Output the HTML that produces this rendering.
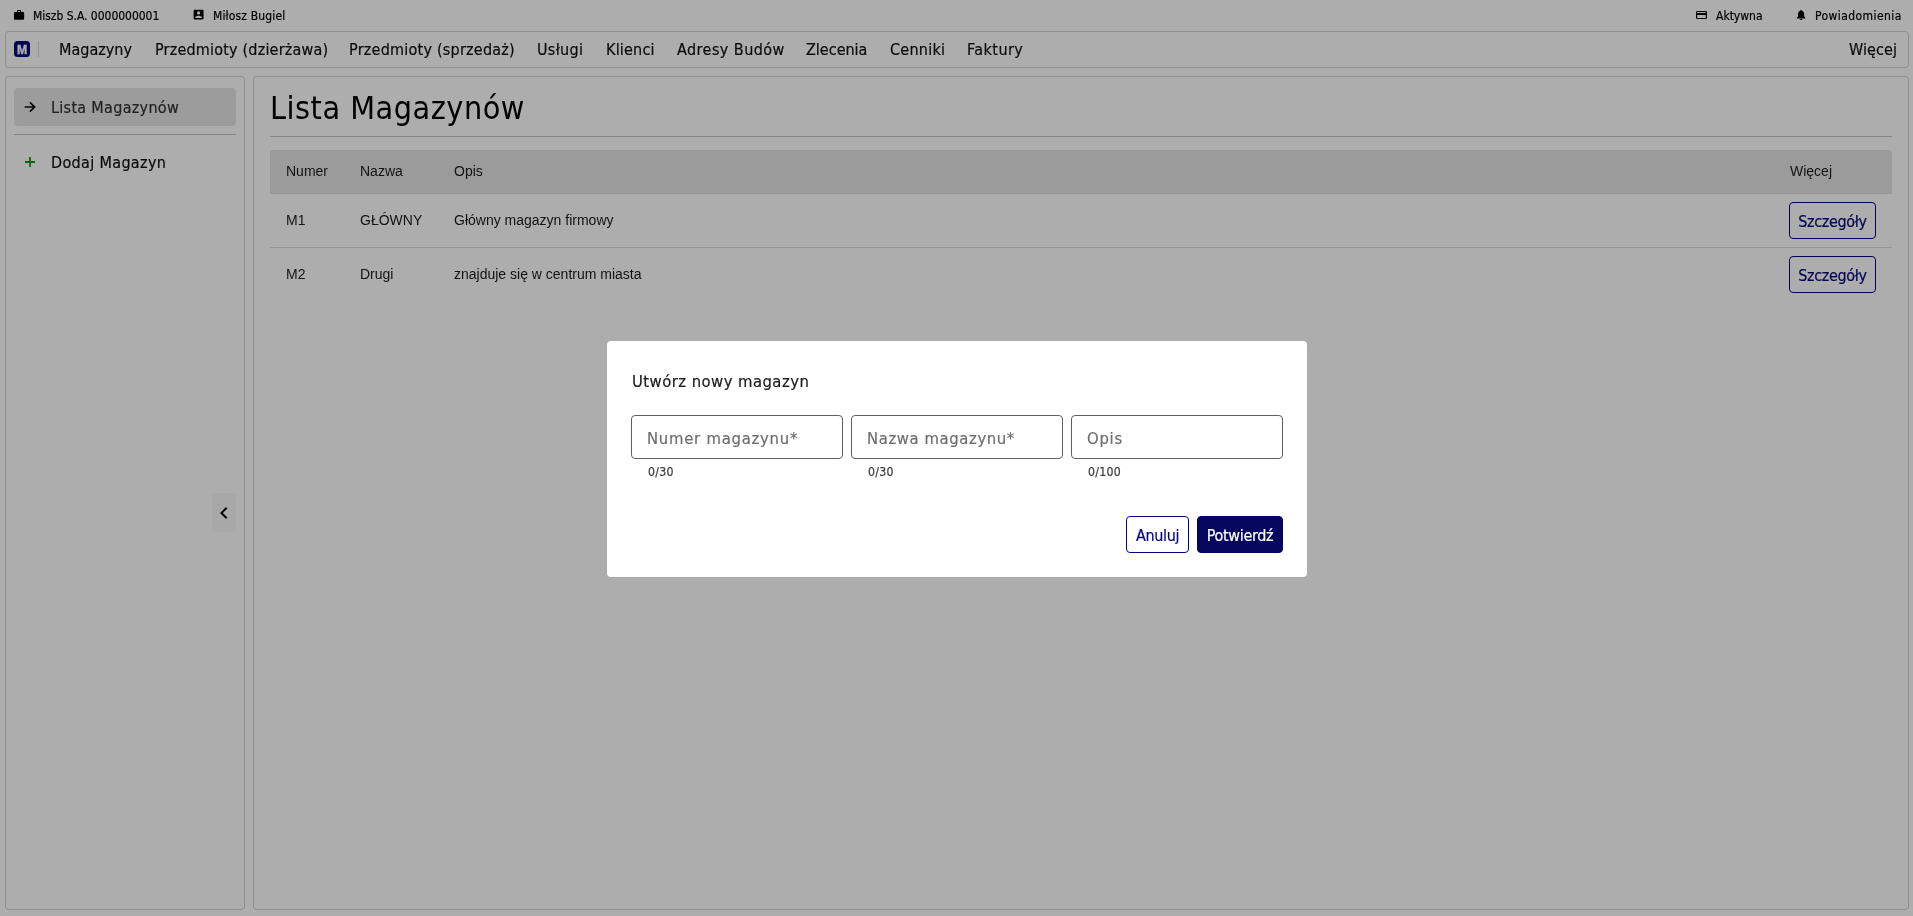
<!DOCTYPE html>
<html lang="pl">
<head>
<meta charset="utf-8">
<title>Lista Magazynów</title>
<style>
*{box-sizing:border-box;margin:0;padding:0}
html,body{width:1913px;height:916px;overflow:hidden;background:#fff}
body{font-family:"DejaVu Sans Condensed","Liberation Sans",sans-serif;color:#000;position:relative}
.abs{position:absolute}
.t{will-change:transform;-webkit-text-stroke:.2px;position:absolute;white-space:nowrap;line-height:1}
/* top bar */
.top{font-size:12px;color:#000}
/* nav */
#nav{left:5px;top:31px;width:1904px;height:37px;border:1px solid #d1d1d1;border-radius:3.5px;background:#fff}
.nv{font-size:16px;color:#111}
#logo{left:14px;top:41px;width:16px;height:16px;border-radius:3.5px;background:#06067a;color:#fff;font-family:"Liberation Sans",sans-serif;font-weight:700;font-size:12.3px;text-align:center;line-height:19.2px;overflow:hidden;will-change:transform;-webkit-text-stroke:.35px}
/* sidebar */
#side{left:5px;top:76px;width:240px;height:834px;border:1px solid #d1d1d1;border-radius:3.5px;background:#fff}
#sel{left:14px;top:88px;width:222px;height:38px;border-radius:4px;background:#e6e6e6}
.sd{font-size:16px}
/* main */
#main{left:253px;top:76px;width:1656px;height:834px;border:1px solid #d1d1d1;border-radius:3.5px;background:#fff}
#title{-webkit-text-stroke:0;font-size:32px;left:270px;top:92.3px;letter-spacing:.52px;color:#000}
.hr{height:1px;background:#c6c6c6}
#thead{left:270px;top:150px;width:1622px;height:44px;background:#e5e5e5;border-radius:3px 3px 0 0;border-bottom:1px solid #dcdcdc}
.tc{font-family:"Liberation Sans",sans-serif;font-size:14px;color:#1c1c1c;-webkit-text-stroke:0}
.btn{will-change:transform;-webkit-text-stroke:.2px;border:1px solid #06067a;border-radius:4px;color:#06067a;font-size:16px;letter-spacing:-.35px;background:transparent;text-align:center}
/* overlay */
#scrim{left:0;top:0;width:1913px;height:916px;background:rgba(0,0,0,.32)}
#modal{left:607px;top:341px;width:700px;height:236px;background:#fff;border-radius:4px}
.inp{top:415px;width:212px;height:44px;border:1px solid #606060;border-radius:4px}
.ph{font-size:16.5px;color:#6e6e6e;top:431px;letter-spacing:.75px}
.cnt{font-size:12.2px;color:#3c3c3c;top:466px;letter-spacing:.3px}
</style>
</head>
<body>
<!-- top bar -->
<svg class="abs" style="left:12.9px;top:8.9px" width="12.2" height="12.2" viewBox="0 0 24 24"><path d="M10,2H14A2,2 0 0,1 16,4V6H20A2,2 0 0,1 22,8V19A2,2 0 0,1 20,21H4C2.89,21 2,20.1 2,19V8C2,6.89 2.89,6 4,6H8V4C8,2.89 8.89,2 10,2M14,6V4H10V6H14Z" fill="#000"/></svg>
<div class="t top" style="left:33.3px;top:10px;letter-spacing:-0.03px" id="t1">Miszb S.A. 0000000001</div>
<svg class="abs" style="left:192.3px;top:8.3px" width="13.2" height="13.2" viewBox="0 0 24 24"><path d="M6,17C6,15 10,13.9 12,13.9C14,13.9 18,15 18,17V18H6M15,9A3,3 0 0,1 12,12A3,3 0 0,1 9,9A3,3 0 0,1 12,6A3,3 0 0,1 15,9M3,5V19A2,2 0 0,0 5,21H19A2,2 0 0,0 21,19V5A2,2 0 0,0 19,3H5C3.89,3 3,3.9 3,5Z" fill="#000"/></svg>
<div class="t top" style="left:213.1px;top:10px;letter-spacing:0.15px" id="t2">Miłosz Bugiel</div>
<svg class="abs" style="left:1696px;top:11px" width="11" height="8" viewBox="0 0 11 8"><path d="M1.200 0H9.800A1.200 1.200 0 0 1 11 1.200V6.800A1.200 1.200 0 0 1 9.800 8H1.200A1.200 1.200 0 0 1 0 6.800V1.200A1.200 1.200 0 0 1 1.200 0ZM1.200 1.050V1.950H9.800V1.050ZM1.200 4.100V6.950H9.800V4.100Z" fill="#000" fill-rule="evenodd"/></svg>
<div class="t top" style="left:1715.7px;top:10px" id="t3">Aktywna</div>
<svg class="abs" style="left:1796px;top:9px" width="11" height="12" viewBox="0 0 11 12"><path d="M5.100 0.900C5.700 0.900 6 1.300 6 1.800C7.400 2.200 8.100 3.400 8.100 4.800V7.200L9.300 8.700V9.600H0.900V8.700L2.100 7.200V4.800C2.100 3.400 2.800 2.200 4.200 1.800C4.200 1.300 4.500 0.900 5.100 0.900ZM3.800 10H6.400C6.400 10.700 5.800 11.100 5.100 11.100C4.400 11.100 3.800 10.700 3.800 10Z" fill="#000"/></svg>
<div class="t top" style="left:1815.3px;top:10px;letter-spacing:0.42px" id="t4">Powiadomienia</div>

<!-- nav -->
<div class="abs" id="nav"></div>
<div class="abs" id="logo">M</div>
<div class="abs" style="left:38px;top:41px;width:1px;height:16px;background:#d8d8d8"></div>
<div class="t nv" style="left:58.5px;top:42px;letter-spacing:0px" id="n1">Magazyny</div>
<div class="t nv" style="left:154.6px;top:42px;letter-spacing:0.19px" id="n2">Przedmioty (dzierżawa)</div>
<div class="t nv" style="left:349.4px;top:42px;letter-spacing:0.23px" id="n3">Przedmioty (sprzedaż)</div>
<div class="t nv" style="left:536.9px;top:42px;letter-spacing:0.3px" id="n4">Usługi</div>
<div class="t nv" style="left:605.9px;top:42px;letter-spacing:0.2px" id="n5">Klienci</div>
<div class="t nv" style="left:676.6px;top:42px;letter-spacing:0.45px" id="n6">Adresy Budów</div>
<div class="t nv" style="left:805.9px;top:42px;letter-spacing:0px" id="n7">Zlecenia</div>
<div class="t nv" style="left:890.1px;top:42px;letter-spacing:0.27px" id="n8">Cenniki</div>
<div class="t nv" style="left:967px;top:42px;letter-spacing:0.45px" id="n9">Faktury</div>
<div class="t nv" style="left:1849.2px;top:42px;letter-spacing:0.1px" id="n10">Więcej</div>

<!-- sidebar -->
<div class="abs" id="side"></div>
<div class="abs" id="sel"></div>
<svg class="abs" style="left:22px;top:99px" width="16" height="16" viewBox="0 0 16 16"><path d="M2.600 8H12M7.900 3.300L12.600 8L7.900 12.700" fill="none" stroke="#0a0a0a" stroke-width="1.700" stroke-linejoin="miter"/></svg>
<div class="t sd" style="left:51px;top:100px;color:#333;letter-spacing:0.3px" id="s1">Lista Magazynów</div>
<div class="abs hr" style="left:14px;top:134px;width:222px"></div>
<svg class="abs" style="left:22px;top:154px" width="16" height="16" viewBox="0 0 16 16"><path d="M3 8H13M8 3V13" fill="none" stroke="#169416" stroke-width="1.800"/></svg>
<div class="t sd" style="left:51px;top:155px;color:#111;letter-spacing:0.34px" id="s2">Dodaj Magazyn</div>
<div class="abs" style="left:212px;top:493px;width:24px;height:39px;border-radius:4px;background:#f8f8f8"></div>
<svg class="abs" style="left:212.2px;top:501.1px" width="24" height="24" viewBox="0 0 24 24"><path d="M15.41,16.58L10.83,12L15.41,7.41L14,6L8,12L14,18L15.41,16.58Z" fill="#000"/></svg>

<!-- main -->
<div class="abs" id="main"></div>
<div class="t" id="title">Lista Magazynów</div>
<div class="abs hr" style="left:270px;top:136px;width:1622px"></div>
<div class="abs" id="thead"></div>
<div class="t tc" style="left:286px;top:164px" id="h1">Numer</div>
<div class="t tc" style="left:360px;top:164px" id="h2">Nazwa</div>
<div class="t tc" style="left:454px;top:164px" id="h3">Opis</div>
<div class="t tc" style="left:1790px;top:164px" id="h4">Więcej</div>
<div class="t tc" style="left:286px;top:213px">M1</div>
<div class="t tc" style="left:360px;top:213px">GŁÓWNY</div>
<div class="t tc" style="left:454px;top:213px">Główny magazyn firmowy</div>
<div class="abs btn" style="left:1789px;top:202px;width:87px;height:37px;line-height:37px" id="b1">Szczegóły</div>
<div class="abs hr" style="left:270px;top:247px;width:1622px;background:#dadada"></div>
<div class="t tc" style="left:286px;top:267px">M2</div>
<div class="t tc" style="left:360px;top:267px">Drugi</div>
<div class="t tc" style="left:454px;top:267px">znajduje się w centrum miasta</div>
<div class="abs btn" style="left:1789px;top:256px;width:87px;height:37px;line-height:37px" id="b2">Szczegóły</div>

<!-- overlay + modal -->
<div class="abs" id="scrim"></div>
<div class="abs" id="modal"></div>
<div class="t" style="left:632.1px;top:374.3px;font-size:16.5px;color:#1c1c1c;letter-spacing:0.45px" id="mt">Utwórz nowy magazyn</div>
<div class="abs inp" style="left:631px"></div>
<div class="abs inp" style="left:851px"></div>
<div class="abs inp" style="left:1071px"></div>
<div class="t ph" style="left:647px" id="p1">Numer magazynu*</div>
<div class="t ph" style="left:866.7px;letter-spacing:0.6px" id="p2">Nazwa magazynu*</div>
<div class="t ph" style="left:1087px" id="p3">Opis</div>
<div class="t cnt" style="left:647.500px" id="c1">0/30</div>
<div class="t cnt" style="left:867.500px" id="c2">0/30</div>
<div class="t cnt" style="left:1087.500px" id="c3">0/100</div>
<div class="abs btn" style="left:1126px;top:516px;width:63px;height:37px;line-height:37px;background:#fff" id="b3">Anuluj</div>
<div class="abs btn" style="left:1197px;top:516px;width:86px;height:37px;line-height:37px;background:#06065e;color:#fff;border-color:#06065e" id="b4">Potwierdź</div>
</body>
</html>
